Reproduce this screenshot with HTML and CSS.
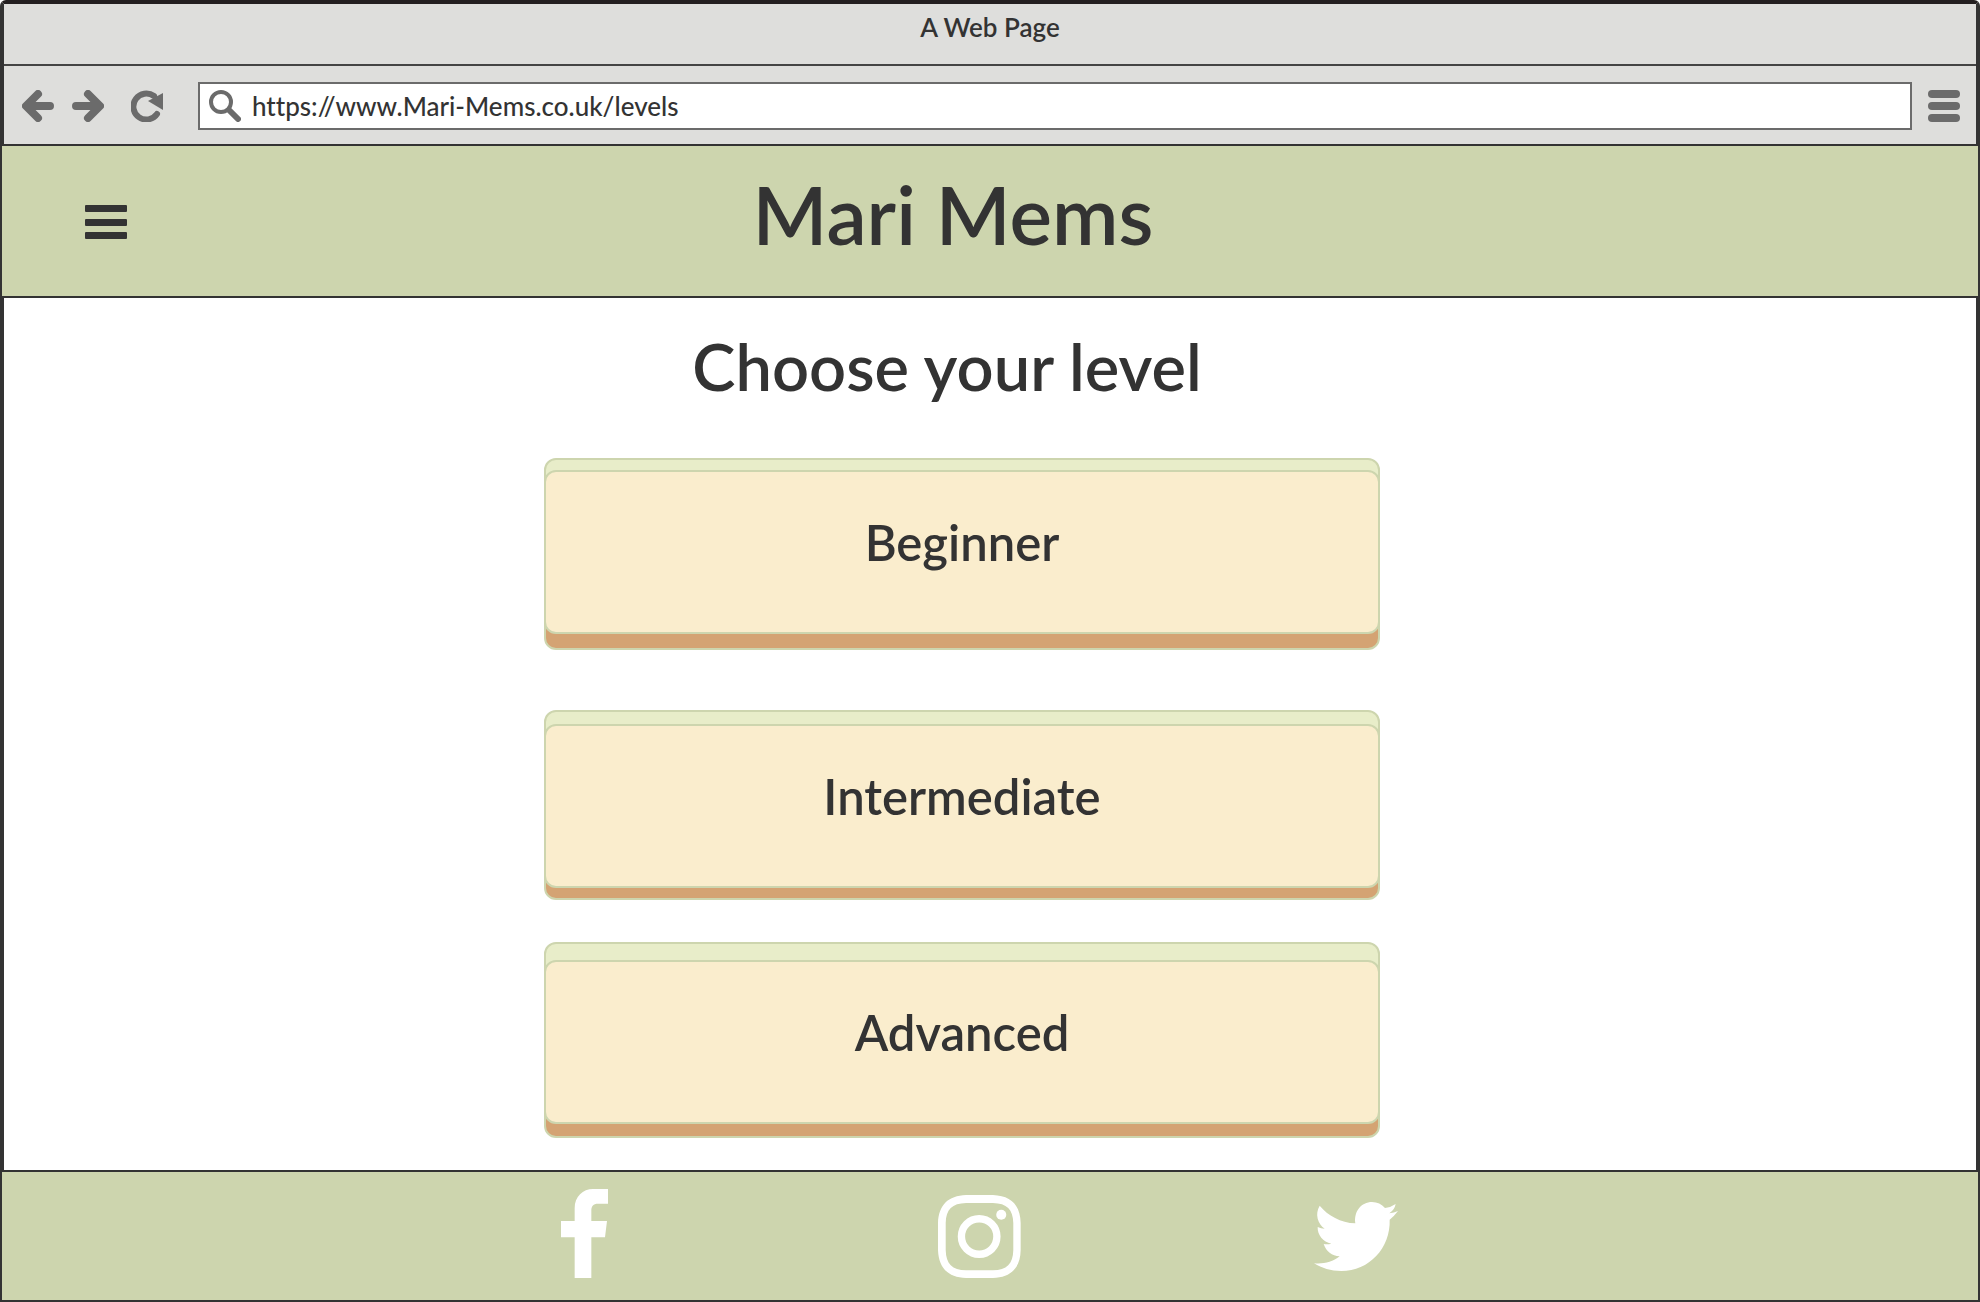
FILE: index.html
```html
<!DOCTYPE html>
<html lang="en">
<head>
  <meta charset="utf-8">
  <meta name="viewport" content="width=device-width, initial-scale=1">
  <title>A Web Page</title>
  <link rel="stylesheet" href="styles.css">
</head>
<body>
  <div class="window">
    <div class="titlebar">A Web Page</div>

    <div class="toolbar">
      <div class="nav-buttons">
        <button class="tool" type="button" aria-label="Back">
          <svg viewBox="0 0 32 32" width="32" height="32" fill="none" stroke="currentColor" stroke-width="8" stroke-linecap="round" stroke-linejoin="round"><path d="M16 4 4 16 16 28M6 16H28"/></svg>
        </button>
        <button class="tool" type="button" aria-label="Forward">
          <svg viewBox="0 0 32 32" width="32" height="32" fill="none" stroke="currentColor" stroke-width="8" stroke-linecap="round" stroke-linejoin="round"><path d="M16 4 28 16 16 28M26 16H4"/></svg>
        </button>
      </div>
      <button class="tool reload" type="button" aria-label="Reload">
        <svg viewBox="0 0 32 32" width="32" height="32"><path d="M23 6A13 13 0 1 0 26 24" fill="none" stroke="currentColor" stroke-width="6" stroke-linecap="round"/><path d="M32 3V20L17 11Z" fill="currentColor"/></svg>
      </button>
      <form class="address">
        <label for="url" aria-label="Address">
          <svg viewBox="0 0 32 32" width="32" height="32" fill="none" stroke="currentColor"><circle cx="12" cy="12" r="10" stroke-width="4"/><path d="M20 20 29 29" stroke-width="6" stroke-linecap="round"/></svg>
        </label>
        <input id="url" type="text" value="https://www.Mari-Mems.co.uk/levels">
      </form>
      <button class="tool" type="button" aria-label="Browser menu">
        <svg viewBox="0 0 32 32" width="32" height="32" fill="currentColor"><rect width="32" height="8" rx="4"/><rect y="12" width="32" height="8" rx="4"/><rect y="24" width="32" height="8" rx="4"/></svg>
      </button>
    </div>

    <header class="site-header">
      <button class="menu" type="button" aria-label="Menu">
        <svg viewBox="0 0 42 34" width="42" height="34" fill="currentColor"><rect width="42" height="7" rx="1"/><rect y="14" width="42" height="7" rx="1"/><rect y="27" width="42" height="7" rx="1"/></svg>
      </button>
      <h1>Mari Mems</h1>
    </header>

    <main class="levels">
      <h2>Choose your level</h2>
      <button class="card beginner" type="button"><span class="face">Beginner</span></button>
      <button class="card intermediate" type="button"><span class="face">Intermediate</span></button>
      <button class="card advanced" type="button"><span class="face">Advanced</span></button>
    </main>

    <footer class="site-footer">
      <nav class="social" aria-label="Social media">
        <a href="#facebook" aria-label="Facebook">
          <svg viewBox="0 0 141 267" width="47" height="89" fill="currentColor"><path d="M41 267V145H0V96H41V58C41 22 66 0 96 0H141V44H111C97 44 91 52 91 64V96H138L132 145H91V267Z"/></svg>
        </a>
        <a href="#instagram" aria-label="Instagram">
          <svg viewBox="0 0 248 248" width="83" height="83" fill="currentColor"><path fill-rule="evenodd" d="M84 0H164C218 2 246 30 247 84V164C246 218 218 246 164 248H84C30 246 2 218 0 164V84C2 30 30 2 84 0ZM84 24C42 25 24 43 23 84V164C24 206 42 224 84 225H164C206 224 224 206 225 164V84C224 43 206 25 164 24Z"/><circle cx="123" cy="124" r="53" fill="none" stroke="currentColor" stroke-width="22"/><circle cx="189" cy="59" r="15"/></svg>
        </a>
        <a href="#twitter" aria-label="Twitter">
          <svg viewBox="0 0 252 207" width="84" height="69" fill="currentColor"><path d="M0 184C24 199 50 207 82 207C165 207 230 138 227 53Q240 43 252 27Q240 33 226 34Q242 23 245 6Q231 16 213 18C203 6 190 0 174 0C142 0 119 28 124 64C80 62 42 41 17 11C2 36 11 65 32 80Q21 80 11 75C10 99 27 120 52 125Q40 128 29 126C36 148 54 162 77 163C55 180 28 187 0 184Z"/></svg>
        </a>
      </nav>
    </footer>
  </div>
</body>
</html>
```
FILE: styles.css
```css
:root {
  --ink: #333333;
  --frame: #231f20;
  --chrome: #dededc;
  --icon: #6b6b6b;
  --sage: #cdd5ae;
  --mint: #e8edc9;
  --cream: #faedcd;
  --caramel: #d4a373;
}

* {
  box-sizing: border-box;
}

body {
  margin: 0;
  background: #ffffff;
  color: var(--ink);
  font-family: Lato, "Open Sans", sans-serif;
  font-weight: 600;
}

button,
input {
  margin: 0;
  padding: 0;
  border: 0;
  background: none;
  color: inherit;
  font: inherit;
}

button {
  cursor: pointer;
}

svg {
  display: block;
}

.window {
  display: flex;
  flex-direction: column;
  min-height: 100vh;
  border: 4px solid var(--ink);
  border-top-color: var(--frame);
  border-bottom: 0;
  border-radius: 6px 6px 0 0;
}

.titlebar {
  height: 62px;
  padding-top: 7px;
  border-bottom: 2px solid #444444;
  background: var(--chrome);
  font-size: 26px;
  line-height: 32px;
  text-align: center;
}

.toolbar {
  display: flex;
  align-items: center;
  height: 78px;
  padding: 2px 16px 0 18px;
  background: var(--chrome);
}

.nav-buttons {
  display: flex;
  gap: 18px;
}

.tool {
  color: var(--icon);
}

.reload {
  margin: 0 35px 0 27px;
}

.address {
  display: flex;
  flex: 1;
  align-items: center;
  gap: 11px;
  height: 48px;
  margin-right: 16px;
  padding-left: 9px;
  border: 2px solid var(--icon);
  background: #ffffff;
}

.address label {
  color: var(--icon);
}

.address input {
  flex: 1;
  min-width: 0;
  height: 44px;
  outline: 0;
  font-size: 26px;
  font-variant-ligatures: none;
  font-weight: 500;
}

.site-header,
.site-footer {
  margin: 0 -4px;
  border: 2px solid var(--ink);
  background: var(--sage);
}

.site-header {
  display: grid;
  grid-template-columns: 1fr auto 1fr;
  align-items: center;
  height: 154px;
  padding: 0 157px 0 83px;
}

.menu {
  justify-self: start;
  padding-top: 2px;
}

h1 {
  margin: 0;
  padding-bottom: 14px;
  font-size: 80px;
  font-weight: 600;
  line-height: 96px;
}

.levels {
  display: flex;
  flex: 1;
  flex-direction: column;
  align-items: center;
  padding: 28px 56px 32px 0;
}

h2 {
  margin: 0 30px 52px 0;
  font-size: 65px;
  font-weight: 600;
  line-height: 80px;
}

.card {
  width: 44%;
  max-width: 836px;
  border: 2px solid var(--sage);
  border-radius: 12px;
  background: linear-gradient(var(--mint) 50%, var(--caramel) 50%);
  font-size: 49px;
}

.face {
  display: flex;
  align-items: center;
  justify-content: center;
  height: 164px;
  margin: 0 -2px;
  padding-bottom: 20px;
  border: 2px solid var(--sage);
  border-radius: 12px;
  background: var(--cream);
}

.beginner {
  margin-bottom: 60px;
  padding: 10px 0 14px;
}

.intermediate {
  margin-bottom: 42px;
  padding: 12px 0 10px;
}

.advanced {
  padding: 16px 0 12px;
}

.site-footer {
  padding: 17px 22px 22px 0;
}

.social {
  display: grid;
  grid-template-columns: 1fr auto 1fr;
  align-items: end;
  width: 43%;
  max-width: 837px;
  margin: 0 auto;
}

.social a {
  color: #ffffff;
}

.social a:first-child {
  justify-self: start;
}

.social a:last-child {
  justify-self: end;
  margin-bottom: 7px;
}
```
